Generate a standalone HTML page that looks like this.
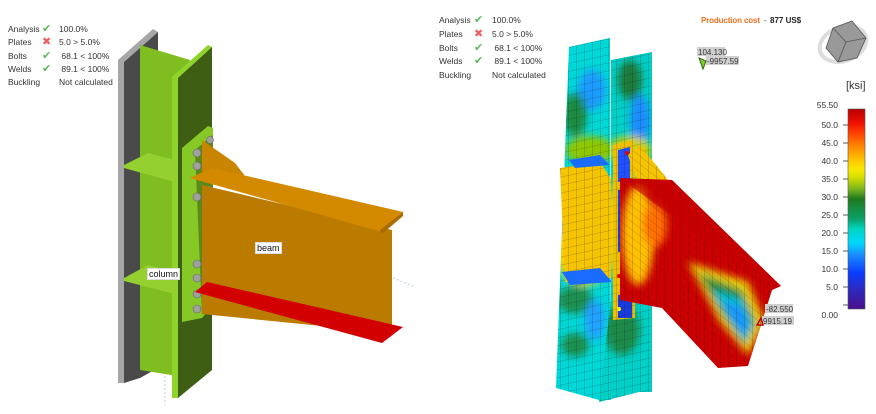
<!DOCTYPE html>
<html><head><meta charset="utf-8"><style>
body{margin:0;width:876px;height:414px;background:#fff;overflow:hidden;font-family:"Liberation Sans",sans-serif;}
.t{position:absolute;font-size:8.5px;color:#333;line-height:13.3px}
.lab{position:absolute;background:#fff;font-size:9px;padding:0 1px;border:1px solid #ddd;color:#111}
</style></head><body>
<svg width="876" height="414" style="position:absolute;left:0;top:0">
<defs>
<pattern id="g" width="8" height="8" patternUnits="userSpaceOnUse" patternTransform="skewY(-12)"><path d="M0 0H8M0 0V8" stroke="#111" stroke-width="0.6" fill="none" opacity="0.55"/></pattern>
<pattern id="g2" width="8" height="8" patternUnits="userSpaceOnUse" patternTransform="skewY(38)"><path d="M0 0H8M0 0V8" stroke="#111" stroke-width="0.6" fill="none" opacity="0.55"/></pattern>
<filter id="b" x="-50%" y="-50%" width="200%" height="200%"><feGaussianBlur stdDeviation="4"/></filter>
<clipPath id="cb"><polygon points="569,47 610,38 611,400 599,400 556,388"/></clipPath>
<clipPath id="cf"><polygon points="611,60 652,52 652,392 639,392 599,402 611,300"/></clipPath>
<clipPath id="cw"><polygon points="620,178 672,180 781,286 772,290 748,366 718,368 662,308 620,300"/></clipPath>
<linearGradient id="lg" x1="0" y1="1" x2="0" y2="0">
<stop offset="0" stop-color="#4b0f8a"/><stop offset=".1" stop-color="#2b2ac0"/><stop offset=".18" stop-color="#0a3cff"/><stop offset=".27" stop-color="#1a8cff"/><stop offset=".33" stop-color="#00d8ff"/><stop offset=".4" stop-color="#00d6c0"/><stop offset=".45" stop-color="#0ca06a"/><stop offset=".55" stop-color="#1e7a1e"/><stop offset=".6" stop-color="#7ab41e"/><stop offset=".66" stop-color="#d8e000"/><stop offset=".7" stop-color="#f8e800"/><stop offset=".75" stop-color="#ffc000"/><stop offset=".82" stop-color="#ff8000"/><stop offset=".88" stop-color="#ff4000"/><stop offset=".93" stop-color="#ee1000"/><stop offset="1" stop-color="#b80000"/></linearGradient>
</defs>
<!-- LEFT MODEL -->
<line x1="165" y1="360" x2="165" y2="405" stroke="#bcd" stroke-dasharray="2 2"/>
<line x1="393" y1="278" x2="415" y2="287" stroke="#bcd" stroke-dasharray="2 2"/>
<polygon points="118,60 153,29 158,32 124,62 124,383 118,383" fill="#a6a6a6"/>
<polygon points="124,62 158,32 158,368 140,378 124,383" fill="#4a4a4a"/>
<polygon points="140,45 190,60 190,378 140,370" fill="#7fbd20"/>
<polygon points="172,77 208,45 212,47 178,78 178,398 172,398" fill="#8ed42a"/>
<polygon points="178,78 212,47 212,370 178,398" fill="#3e5e14"/>
<polygon points="124,165 148,153 175,160 175,182 124,168" fill="#93d030"/>
<polygon points="124,278 148,265 175,272 175,294 124,281" fill="#93d030"/>
<polygon points="182,148 208,126 213,128 213,305 202,318 182,322" fill="#86c926"/>
<polygon points="195,150 213,135 213,305 202,315" fill="#5c8a1a"/>
<g fill="#a0a0a0" stroke="#666" stroke-width=".6">
<circle cx="197" cy="153" r="4"/><circle cx="210" cy="140" r="3.5"/><circle cx="197" cy="166" r="4"/><circle cx="197" cy="197" r="4"/><circle cx="197" cy="264" r="4"/><circle cx="197" cy="278" r="4"/><circle cx="197" cy="294" r="4"/><circle cx="197" cy="309" r="4"/></g>
<polygon points="202,185 392,230 392,333 202,314" fill="#bb7a00"/>
<polygon points="202,140 235,163 248,180 202,178" fill="#c98400"/>
<polygon points="190,178 212,168 403,212 382,232" fill="#d48a00"/>
<polygon points="380,230 403,212 403,216 382,234" fill="#a86c00"/>
<polygon points="195,292 207,282 403,327 382,343" fill="#d20000"/>
<!-- RIGHT MODEL -->
<g clip-path="url(#cb)">
<rect x="550" y="30" width="70" height="380" fill="#00d8d8"/>
<g filter="url(#b)">
<ellipse cx="592" cy="90" rx="14" ry="20" fill="#1a9bff"/>
<ellipse cx="575" cy="115" rx="12" ry="22" fill="#1e8a40"/>
<ellipse cx="590" cy="150" rx="25" ry="14" fill="#90c800"/>
<ellipse cx="585" cy="235" rx="35" ry="50" fill="#f4d000"/>
<ellipse cx="570" cy="220" rx="9" ry="16" fill="#1a3cff"/>
<ellipse cx="575" cy="300" rx="18" ry="14" fill="#1e9050"/>
<ellipse cx="595" cy="320" rx="10" ry="20" fill="#20a0ff"/>
<ellipse cx="575" cy="345" rx="14" ry="12" fill="#1e9050"/>
</g>
<rect x="550" y="30" width="70" height="380" fill="url(#g)"/>
</g>
<polygon points="560,168 600,162 612,180 612,278 565,282" fill="#f6c400"/>
<polygon points="560,168 600,162 612,180 612,278 565,282" fill="url(#g)"/>
<polygon points="569,160 600,155 610,165 575,168" fill="#1a6cff"/>
<polygon points="562,272 600,268 612,282 570,285" fill="#1a6cff"/>
<g clip-path="url(#cf)">
<rect x="595" y="45" width="60" height="360" fill="#00d0c8"/>
<g filter="url(#b)">
<ellipse cx="630" cy="80" rx="12" ry="20" fill="#1a7a3a"/>
<ellipse cx="640" cy="120" rx="10" ry="25" fill="#1a8cff"/>
<ellipse cx="630" cy="150" rx="22" ry="14" fill="#d0d000"/>
<ellipse cx="628" cy="230" rx="22" ry="60" fill="#ffd000"/>
<ellipse cx="622" cy="330" rx="18" ry="25" fill="#1e8a4a"/>
</g>
<rect x="595" y="45" width="60" height="360" fill="url(#g)"/>
</g>
<polygon points="613,145 633,140 635,318 613,320" fill="#f0c000"/>
<polygon points="618,150 630,147 630,180 618,182" fill="#2050ff"/>
<polygon points="618,190 630,188 630,250 618,252" fill="#1a3cdc"/>
<polygon points="618,295 632,293 632,318 618,318" fill="#1a3cdc"/>
<circle cx="627" cy="153" r="2" fill="#e00"/><circle cx="627" cy="198" r="2" fill="#e00"/><circle cx="619" cy="276" r="2" fill="#e00"/><circle cx="619" cy="309" r="2" fill="#ff0"/>
<polygon points="613,145 633,140 635,318 613,320" fill="url(#g)"/>
<polygon points="628,155 640,145 672,185 655,190 636,178" fill="#f6c400"/>
<polygon points="628,155 640,145 672,185 655,190 636,178" fill="url(#g2)"/>
<g clip-path="url(#cw)">
<rect x="610" y="170" width="180" height="210" fill="#cc0000"/>
<g filter="url(#b)">
<ellipse cx="638" cy="235" rx="16" ry="50" fill="#ffc000"/>
<ellipse cx="655" cy="225" rx="12" ry="22" fill="#ff7000"/>
<polygon points="688,262 748,282 765,322 748,355 720,322" fill="#f0d800"/>
<polygon points="698,272 742,290 756,322 745,345 722,314" fill="#1a8a40"/>
<polygon points="712,290 742,300 752,324 745,342 728,316" fill="#00c8e0"/>
<polygon points="722,300 742,308 748,325 744,336" fill="#1a8cff"/>
</g>
<rect x="610" y="170" width="180" height="210" fill="url(#g2)"/>
</g>
<polygon points="620,178 672,180 781,286 772,290" fill="#c40000" opacity=".6"/>
<!-- labels right -->
<rect x="697" y="47" width="28" height="9" fill="#d0d0d0"/><text x="698" y="55" font-size="8" fill="#333">104.130</text>
<rect x="706" y="56" width="33" height="9" fill="#d0d0d0"/><text x="707" y="64" font-size="8" fill="#333">-9957.59</text>
<path d="M699 58 l7 3 l-3 8z" fill="#7ad030" stroke="#3a6010"/>
<rect x="765" y="304" width="28" height="9" fill="#d0d0d0"/><text x="766" y="312" font-size="8" fill="#333">-82.550</text>
<rect x="762" y="316" width="32" height="9" fill="#d0d0d0"/><text x="763" y="324" font-size="8" fill="#333">9915.19</text>
<path d="M757 325 l4 -7 l2 7z" fill="none" stroke="#b00" stroke-width="1.4"/>
<!-- cube -->
<ellipse cx="843" cy="44" rx="24" ry="17" fill="none" stroke="#ddd" stroke-width="4" transform="rotate(-20 843 44)"/>
<polygon points="833,28 852,21 866,38 857,58 838,62 826,48" fill="#999" stroke="#555" stroke-width=".8"/>
<path d="M833,28 L846,42 L866,38 M846,42 L838,62" stroke="#555" stroke-width=".8" fill="none"/>
<text x="846" y="89" font-size="11" fill="#333">[ksi]</text>
<rect x="848" y="109" width="17" height="200" fill="url(#lg)" stroke="#555" stroke-width=".6"/>
<g font-size="8.5" fill="#333" text-anchor="end">
<text x="838" y="108">55.50</text><text x="838" y="128">50.0</text><text x="838" y="146">45.0</text><text x="838" y="164">40.0</text><text x="838" y="182">35.0</text><text x="838" y="200">30.0</text><text x="838" y="218">25.0</text><text x="838" y="236">20.0</text><text x="838" y="254">15.0</text><text x="838" y="272">10.0</text><text x="838" y="290">5.0</text><text x="838" y="318">0.00</text></g>
<g stroke="#555"><line x1="843" y1="125" x2="848" y2="125"/><line x1="843" y1="143" x2="848" y2="143"/><line x1="843" y1="161" x2="848" y2="161"/><line x1="843" y1="179" x2="848" y2="179"/><line x1="843" y1="197" x2="848" y2="197"/><line x1="843" y1="215" x2="848" y2="215"/><line x1="843" y1="233" x2="848" y2="233"/><line x1="843" y1="251" x2="848" y2="251"/><line x1="843" y1="269" x2="848" y2="269"/><line x1="843" y1="287" x2="848" y2="287"/><line x1="843" y1="305" x2="848" y2="305"/></g>
<text x="701" y="23" font-size="8" font-weight="bold" fill="#f07020" textLength="59">Production cost</text>
<text x="764" y="23" font-size="8" fill="#333">-</text>
<text x="770" y="23" font-size="8" font-weight="bold" fill="#222">877 US$</text>
</svg>
<div class="lab" style="left:147px;top:268px">column</div>
<div class="lab" style="left:255px;top:242px">beam</div>
<div class="t" style="left:8px;top:23px">Analysis<br>Plates<br>Bolts<br>Welds<br>Buckling</div>
<div class="t" style="left:42px;top:23px;font-size:11px;line-height:13.3px"><span style="color:#5cb85c">✔</span><br><span style="color:#f06060">✖</span><br><span style="color:#5cb85c">✔</span><br><span style="color:#5cb85c">✔</span></div>
<div class="t" style="left:59px;top:23px">100.0%<br>5.0 &gt; 5.0%<br>&nbsp;68.1 &lt; 100%<br>&nbsp;89.1 &lt; 100%<br>Not calculated</div>
<div class="t" style="left:439px;top:14px;line-height:13.8px">Analysis<br>Plates<br>Bolts<br>Welds<br>Buckling</div>
<div class="t" style="left:474px;top:14px;font-size:11px;line-height:13.8px"><span style="color:#5cb85c">✔</span><br><span style="color:#f06060">✖</span><br><span style="color:#5cb85c">✔</span><br><span style="color:#5cb85c">✔</span></div>
<div class="t" style="left:492px;top:14px;line-height:13.8px">100.0%<br>5.0 &gt; 5.0%<br>&nbsp;68.1 &lt; 100%<br>&nbsp;89.1 &lt; 100%<br>Not calculated</div>
</body></html>
